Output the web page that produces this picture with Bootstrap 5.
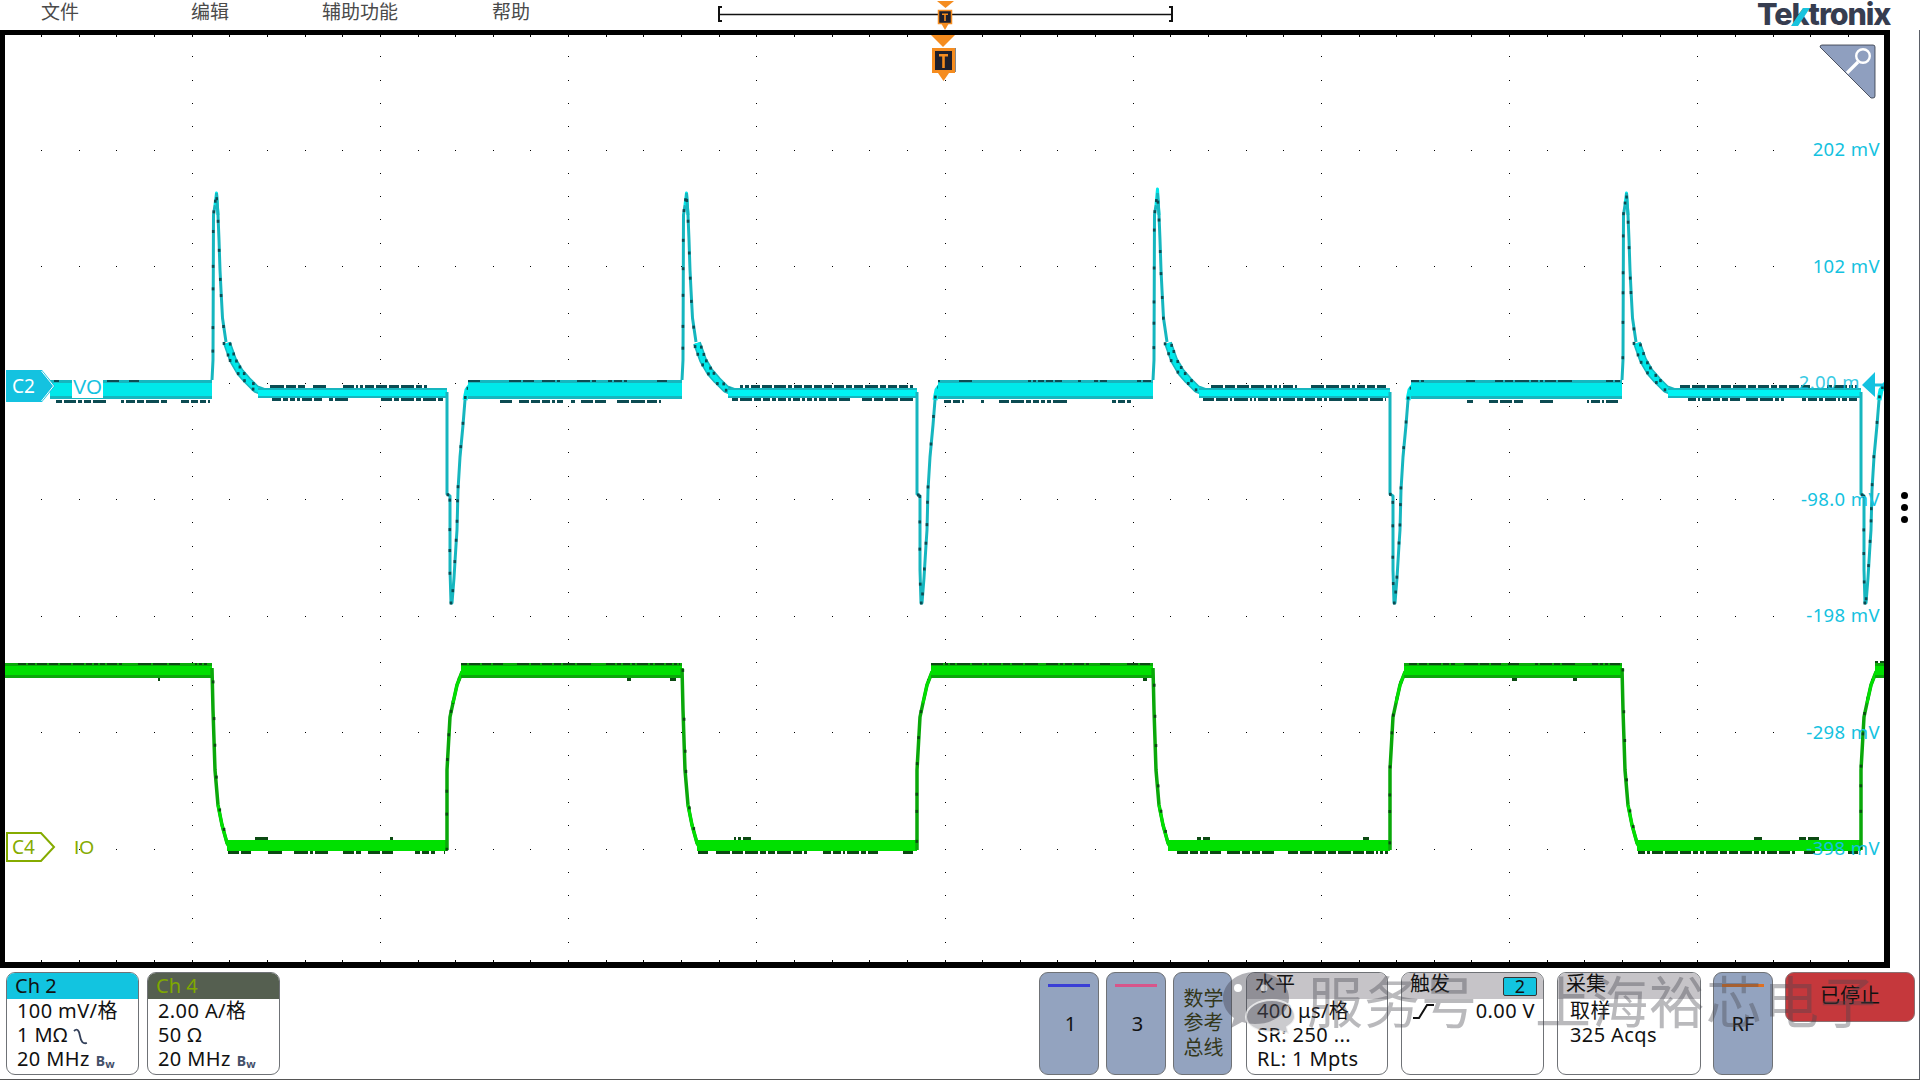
<!DOCTYPE html>
<html lang="zh-CN">
<head>
<meta charset="UTF-8">
<title>Tektronix 示波器</title>
<link href="https://cdn.jsdelivr.net/npm/bootstrap@5.3.0/dist/css/bootstrap.min.css" rel="stylesheet">
<style>
    html, body { margin: 0; height: 1080px; width: 1920px; overflow: hidden; background: #fff; }
    body { font-family: "Noto Sans", "Noto Sans CJK SC", sans-serif; color: #111; position: relative; }
    .top-bar { height: 30px; padding-left: 41px; }
    .menu-entry { font-size: 19px; line-height: 24px; color: #4a4a4a; }
    .m1 { width: 150px; } .m2 { width: 131px; } .m3 { width: 170px; } .m4 { width: 226px; }
    .time-ruler { width: 455px; height: 30px; position: relative; }
    .time-ruler svg { position: absolute; left: 0; top: 0; }
    .tek-logo { position: relative; margin-left: auto; margin-right: 27px; width: 136px; height: 30px; font-family: Inter, sans-serif;
        font-weight: 800; font-size: 30.5px; letter-spacing: -1.1px; line-height: 27px; color: #363d50; white-space: nowrap; }
    .tek-logo svg { position: absolute; left: 0; top: 0; }
    .scope-row { height: 938px; }
    .plot-frame { width: 1890px; height: 938px; border: solid #000; border-width: 5px 6px 6px 5px; }
    .plot-frame svg { display: block; }
    .side-strip { width: 30px; height: 938px; padding-top: 16px; border-right: 1px solid #5b6068; }
    .side-strip i { display: block; width: 7px; height: 7px; border-radius: 50%; background: #000; margin: 2.5px 0; }
    .bottom-bar { height: 112px; padding: 4px 4px 0 6px; border-bottom: 1px solid #555; border-right: 1px solid #5b6068; }
    .info-box { width: 133px; height: 103px; border: 1.5px solid #6f7276; border-radius: 9px; overflow: hidden; font-size: 20px; line-height: 24px; background: #fff; }
    .wide-a { width: 142px; } .wide-b { width: 143px; } .wide-c { width: 144px; }
    .box-head { height: 26px; padding-left: 8px; line-height: 26px; }
    .head-cyan { background: #12c4e0; }
    .head-olive { background: #555f50; color: #7fa800; }
    .head-grey { background: #c6c4c8; line-height: 22px; }
    .box-line { padding-left: 10px; white-space: nowrap; height: 24px; letter-spacing: .4px; }
    .line-wide { padding-left: 12px; }
    .bw-mark { font-size: 14px; font-weight: 700; color: #44506a; margin-left: 6px; letter-spacing: 0; }
    .bw-mark sub { font-size: 11px; bottom: -.2em; }
    .soft-btn { width: 60px; height: 103px; border: 1.5px solid #6f7276; border-radius: 9px; background: #93a3bf; font-size: 20px; line-height: 24px; position: relative; }
    .soft-btn b { position: absolute; left: 8px; right: 8px; top: 11px; height: 3px; }
    .num-btn { padding-left: 3px; }
    .math-text { width: 59px; color: #33371a; line-height: 24.5px; padding-left: 2px; }
    .gap-a { margin-left: 7px; } .gap-b { margin-left: 13px; } .gap-c { margin-left: 14px; } .gap-d { margin-left: 12px; }
    .group-start { margin-left: auto; }
    .trig-chip { width: 34px; height: 19px; margin: 4px 6px 0 auto; background: #12c4e0; border: 1px solid #333; border-radius: 2px; line-height: 17px; text-align: center; font-size: 18px; }
    .stop-btn { width: 130px; height: 50px; margin-left: 12px; border: 1.5px solid #8a7072; border-radius: 9px; background: #c5383c; line-height: 46px; text-align: center; font-size: 20px; color: #111; }
    .water-mark { position: absolute; left: 1222px; top: 966px; width: 640px; height: 70px; pointer-events: none; }
    .water-mark span { position: absolute; top: 0; font-size: 56px; line-height: 70px; color: rgba(70,70,80,.38); white-space: nowrap; letter-spacing: 1px; }
    .water-mark svg { position: absolute; left: 0; top: 0; }
    .plot-label { font-family: "Noto Sans", sans-serif; font-size: 18.5px; letter-spacing: .4px; fill: #14c2e0; }
</style>
</head>
<body>
<div class="top-bar d-flex">
    <div class="menu-entry m1">文件</div>
    <div class="menu-entry m2">编辑</div>
    <div class="menu-entry m3">辅助功能</div>
    <div class="menu-entry m4">帮助</div>
    <div class="time-ruler">
        <svg width="455" height="30" viewBox="718 0 455 30">
            <path d="M722 7h-3v14h3M1169 7h3v14h-3" fill="none" stroke="#111" stroke-width="2"/>
            <path d="M720 14.5H1171" stroke="#111" stroke-width="1.4"/>
            <path d="M937 1h17l-8.500 7z" fill="#f58c1f"/>
            <rect x="938.500" y="10.500" width="13" height="13" fill="#1f1f2b" stroke="#f58c1f" stroke-width="1.500"/>
            <path d="M941.500 24h7l-3.500 6z" fill="#f58c1f"/>
            <path d="M942 13.500h6v1.500h-2.200v6h-1.600v-6H942z" fill="#f58c1f"/>
        </svg>
    </div>
    <div class="tek-logo">Tektronix
        <svg width="136" height="30"><path d="M34 26 46 8h7L41 26z" fill="#19c3de"/></svg>
    </div>
</div>

<div class="scope-row d-flex">
    <div class="plot-frame">
        <svg id="plot" width="1879" height="927" viewBox="5 35 1879 927" xmlns="http://www.w3.org/2000/svg">
            <path id="grid" fill="#000" shape-rendering="crispEdges"/>
            <g id="traces"></g>
            <rect x="72" y="377" width="31" height="21" fill="#fff"/>
            <path d="M6 370h36l13 16-13 16H6z" fill="#14c2e0"/>
            <path d="M41.500 371l12 15-12 15" fill="none" stroke="#fff" stroke-width="1"/>
            <text x="12" y="393" font-size="19" fill="#fff" font-family="Noto Sans">C2</text>
            <text x="73" y="394" font-size="20" fill="#14c2e0" font-family="Liberation Sans">VO</text>
            <path d="M7 833h34l13 14-13 14H7z" fill="#fff" stroke="#85ab00" stroke-width="2"/>
            <text x="12" y="853.500" font-size="19" fill="#85ab00" font-family="Noto Sans">C4</text>
            <text x="74" y="853.500" font-size="19" fill="#85ab00" font-family="Liberation Sans">IO</text>
            <text x="1880" y="156" class="plot-label" text-anchor="end">202 mV</text>
            <text x="1880" y="273" class="plot-label" text-anchor="end">102 mV</text>
            <text x="1860" y="389" class="plot-label" text-anchor="end" opacity=".85">2.00 m</text>
            <text x="1880" y="506" class="plot-label" text-anchor="end">-98.0 mV</text>
            <text x="1880" y="622" class="plot-label" text-anchor="end">-198 mV</text>
            <text x="1880" y="739" class="plot-label" text-anchor="end">-298 mV</text>
            <text x="1880" y="855" class="plot-label" text-anchor="end">-398 mV</text>
            <path d="M1862 385l13-13v11.500h11v3h-11v10.500z" fill="#14c2e0"/>
            <!-- trigger marker -->
            <path d="M931 35h24l-12 12z" fill="#f58c1f"/>
            <path d="M955 48v24" stroke="#111" stroke-width="1"/>
            <rect x="933.500" y="49.500" width="20" height="22" fill="#1f1f2b" stroke="#f58c1f" stroke-width="3"/>
            <path d="M938 73h11l-5.500 8z" fill="#f58c1f"/>
            <path d="M939 54h9v2.500h-3.200V68h-2.600V56.500H939z" fill="#f58c1f"/>
            <!-- zoom corner -->
            <path d="M1820 47q0-2 2-2h51q2 0 2 2v49q0 2-2 2h-2z" fill="#8f9fbf" stroke="#2d3340" stroke-width=".8"/>
            <circle cx="1863" cy="56" r="6.800" fill="none" stroke="#fff" stroke-width="2.400"/>
            <path d="M1858 62l-11 11" stroke="#fff" stroke-width="3.200"/>
        </svg>
    </div>
    <div class="side-strip d-flex flex-column align-items-center justify-content-center"><i></i><i></i><i></i></div>
</div>

<div class="bottom-bar d-flex">
    <div class="info-box">
        <div class="box-head head-cyan">Ch 2</div>
        <div class="box-line">100 mV/格</div>
        <div class="box-line">1 MΩ <svg width="16" height="19" viewBox="0 0 16 19"><path d="M1 4C4 1 6 3 7 9s3 8 7 7" fill="none" stroke="#33405a" stroke-width="1.800"/></svg></div>
        <div class="box-line">20 MHz<span class="bw-mark">B<sub>w</sub></span></div>
    </div>
    <div class="info-box ms-2">
        <div class="box-head head-olive">Ch 4</div>
        <div class="box-line">2.00 A/格</div>
        <div class="box-line">50 Ω</div>
        <div class="box-line">20 MHz<span class="bw-mark">B<sub>w</sub></span></div>
    </div>

    <div class="soft-btn num-btn group-start d-flex align-items-center justify-content-center"><b style="background:#3a3fd6"></b><span>1</span></div>
    <div class="soft-btn num-btn gap-a d-flex align-items-center justify-content-center"><b style="background:#d8558a"></b><span>3</span></div>
    <div class="soft-btn math-text gap-a d-flex align-items-center justify-content-center text-center"><span>数学<br>参考<br>总线</span></div>

    <div class="info-box wide-a gap-c">
        <div class="box-head head-grey">水平</div>
        <div class="box-line">400 μs/格</div>
        <div class="box-line">SR: 250 ...</div>
        <div class="box-line">RL: 1 Mpts</div>
    </div>
    <div class="info-box wide-b gap-b">
        <div class="box-head head-grey d-flex">触发<div class="trig-chip">2</div></div>
        <div class="box-line d-flex align-items-center"><svg width="24" height="18" viewBox="0 0 24 18"><path d="M1 16h6L15 3h7" fill="none" stroke="#111" stroke-width="2"/></svg><span class="ms-auto pe-2">0.00 V</span></div>
    </div>
    <div class="info-box wide-c gap-b">
        <div class="box-head head-grey">采集</div>
        <div class="box-line line-wide">取样</div>
        <div class="box-line line-wide">325 Acqs</div>
    </div>
    <div class="soft-btn gap-d d-flex align-items-center justify-content-center"><b style="background:#e07020"></b><span>RF</span></div>
    <div class="stop-btn">已停止</div>
</div>

<div class="water-mark">
    <svg width="90" height="70" viewBox="0 0 90 70">
        <path d="M33 6C15 6 1 18 1 32c0 8 4 15 11 20l-3 10 11-6c4 1 8 2 13 2 20 0 34-12 34-26S53 6 33 6z" fill="rgba(70,70,80,.42)"/>
        <circle cx="16" cy="22" r="4" fill="#fff"/><circle cx="42" cy="22" r="3.500" fill="rgba(255,255,255,.6)"/>
        <path d="M50 34c-14 0-26 7-26 17 0 9 11 15 26 15 3 0 6 0 8-1l9 3-2-7c5-3 8-6 8-10 0-10-10-17-23-17z" fill="rgba(70,70,80,.28)" stroke="rgba(255,255,255,.7)" stroke-width="2"/>
    </svg>
    <span style="left:85px">服务号</span>
    <span style="left:313px">上海裕芯电子</span>
</div>

<script>
    const NS = 'http://www.w3.org/2000/svg';
    const colX = [], rowY = [];
    for (let i = 0; i < 10; i++) colX.push(3.5 + 188.2 * i);
    for (let j = 0; j < 9; j++) rowY.push(33 + 116.5 * j);

    let grid = '';
    const dot = (x, y, h) => { grid += 'M' + Math.round(x) + ' ' + Math.round(y) + 'h1v' + (h || 1) + 'h-1z'; };
    colX.forEach(x => { for (let j = 1; j < 40; j++) dot(x, 33 + 23.3 * j); });
    // the row dots stop short of the voltage labels on the right
    rowY.forEach(y => { for (let i = 1; i < 48; i++) dot(3.5 + 37.64 * i, y); });
    for (let i = 1; i < 50; i++) { dot(3.5 + 37.64 * i, 35, 2); dot(3.5 + 37.64 * i, 960, 2); }
    document.getElementById('grid').setAttribute('d', grid);

    const traces = document.getElementById('traces');
    const add = (tag, attrs) => {
        const el = document.createElementNS(NS, tag);
        for (const k in attrs) el.setAttribute(k, attrs[k]);
        traces.appendChild(el);
    };
    let seed = 7;
    const rnd = () => { seed = (seed * 16807) % 2147483647; return seed / 2147483647; };
    // runs of dark sample dots along a band edge
    const speckle = (x0, x1, y, color, density, tall) => {
        let d = '', x = x0;
        while (x < x1) {
            const w = Math.min(Math.round(2 + rnd() * 12), Math.max(1, Math.round(x1 - x)));
            if (rnd() < density) d += 'M' + Math.round(x) + ' ' + y + 'h' + w + 'v' + (tall || 2) + 'h-' + w + 'z';
            x += w + 2;
        }
        add('path', { d: d, fill: color, 'shape-rendering': 'crispEdges' });
    };
    const band = (x0, x1, y, h, edge, core, inset) => {
        add('rect', { x: x0, y: y, width: x1 - x0, height: h, fill: edge });
        add('rect', { x: x0, y: y + inset, width: x1 - x0, height: h - inset * 2, fill: core });
    };
    const line = (pts, dx, color, w) => add('polyline', { points: pts.map(p => (p[0] + dx) + ',' + p[1]).join(' '), fill: 'none', stroke: color, 'stroke-width': w, 'stroke-linejoin': 'round' });
    // dark sample dots scattered along a polyline
    const pepper = (pts, dx, color, step) => {
        for (let i = 1; i < pts.length; i++) {
            const a = pts[i - 1], b = pts[i], n = Math.max(1, Math.round(Math.abs(b[1] - a[1]) / step));
            for (let s = 0; s < n; s++) {
                const t = (s + rnd() * .5) / n;
                add('rect', { x: a[0] + (b[0] - a[0]) * t + dx - 1.5, y: a[1] + (b[1] - a[1]) * t - 1.5, width: 2.6, height: 3, fill: color });
            }
        }
    };

    const ups = [212, 682, 1153, 1622], downs = [447, 917, 1390, 1861];
    const tops = [193, 193, 189, 193];
    const CY = '#00e8ea', CYE = '#16b6bf', CYD = '#0c4b52', GR = '#00e000', GRE = '#0aa80a', GRD = '#0b4a12';

    const upLeg = [[0, 380], [1, 360], [1.5, 215], [3, 205]];
    const upRight = [[4.5, 193], [6, 215], [7, 240], [8, 270], [9, 290], [10.5, 318], [14, 342]];
    const decay = [[15, 343], [21, 360], [28, 372], [35, 380], [44, 389], [52, 392]];
    const spikeDn = [[0, 392], [0, 494], [3, 496], [3, 570], [4, 603], [5, 603], [7, 578], [9, 545], [10, 530], [11, 490], [13, 457], [16, 425], [18, 400], [20, 390], [24, 384]];
    const fall = [[0, 668], [1, 710], [3, 770], [6, 805], [10, 825], [15, 843], [18, 848]];
    const rise = [[0, 850], [0, 770], [3, 717], [6, 703], [10, 685], [15, 672], [20, 666]];

    ups.forEach((u, k) => {
        const prev = k ? downs[k - 1] : -100;
        const d = downs[k];

        // Ch2: wide band before the rising edge
        const wide = Math.max(50, prev + 21);
        band(wide, u, 380, 19, CYE, CY, 3);
        speckle(wide, u - 2, 380, CYD, .45);
        speckle(wide + 6, u - 2, 400, CYD, .6, 3);

        // Ch2: spike and decay
        line(upLeg, u, CYE, 3);
        line([[3, 205], [4.5, tops[k]], [6, 215]], u, CY, 3);
        line(upRight, u, CYE, 3);
        line(decay, u, CYE, 8);
        line(decay, u, CY, 5);
        pepper(upLeg.slice(1).concat(upRight), u, CYD, 28);
        pepper(decay, u + 3, CYD, 7);
        pepper(decay, u - 3, CYD, 9);

        // Ch2: narrow band before the falling edge
        band(u + 46, d, 388, 10, CYE, '#00f3f3', 2);
        speckle(u + 58, d - 4, 385, CYD, .9, 3);
        speckle(u + 50, d - 4, 398, CYD, .85, 3);

        // Ch2: negative spike
        line(spikeDn, d, CYE, 3);
        line([[18, 400], [20, 390], [26, 382]], d, CY, 5);
        pepper(spikeDn.slice(1), d, CYD, 26);

        // Ch4: high band before the falling edge
        const high = Math.max(5, prev + 14);
        band(high, u, 663, 15, GRE, GR, 3);
        speckle(high, u - 2, 663, GRD, .85);
        speckle(high + 6, u - 6, 678, GRD, .07, 3);

        // Ch4: fall, low band, rise
        line(fall, u, GRE, 3.5);
        line(fall.slice(3), u, GR, 3);
        pepper(fall, u + 1, GRD, 32);
        band(u + 15, d, 840, 11, GR, GR, 0);
        speckle(u + 16, d - 2, 851, GRD, .8, 3);
        speckle(u + 26, d - 6, 837, GRD, .15, 3);
        line(rise, d, GRE, 3.5);
        pepper(rise, d, GRD, 30);
        line(rise.slice(3), d, GR, 3);
    });
    band(1875, 1884, 663, 15, GRE, GR, 3);
    speckle(1875, 1884, 661, GRD, .9);
</script>
<script src="https://cdn.jsdelivr.net/npm/bootstrap@5.3.0/dist/js/bootstrap.bundle.min.js"></script>
</body>
</html>
